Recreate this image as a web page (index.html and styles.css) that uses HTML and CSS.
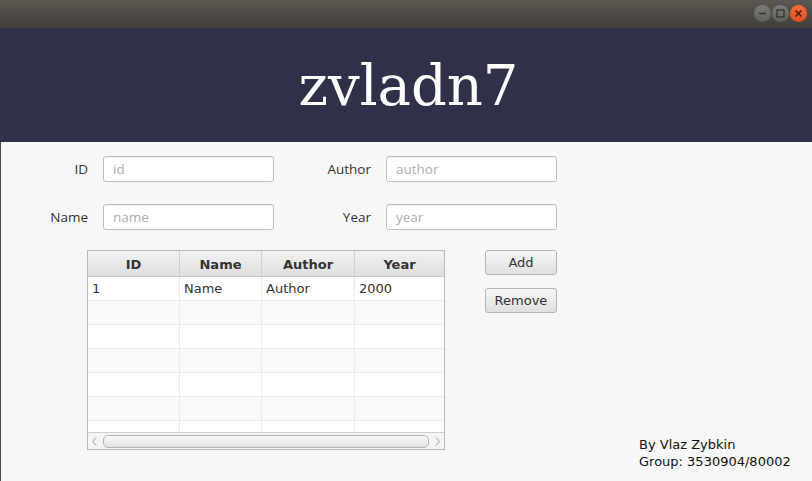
FILE: index.html
```html
<!DOCTYPE html>
<html>
<head>
<meta charset="utf-8">
<link rel="stylesheet" href="styles.css">
</head>
<body>
<div class="window">
  <div class="titlebar">
    <div class="controls">
      <span class="wbtn"><svg width="17" height="17" viewBox="0 0 17 17"><line x1="5" y1="8.5" x2="12" y2="8.5" stroke="#2f2e2b" stroke-width="1.3"/></svg></span>
      <span class="wbtn"><svg width="17" height="17" viewBox="0 0 17 17"><rect x="5" y="5" width="7" height="7" fill="none" stroke="#2f2e2b" stroke-width="1.2"/></svg></span>
      <span class="wbtn close"><svg width="17" height="17" viewBox="0 0 17 17"><path d="M5.5 5.5 L11.5 11.5 M11.5 5.5 L5.5 11.5" stroke="#3a1a0c" stroke-width="1.4"/></svg></span>
    </div>
  </div>
  <header class="header"><h1 class="title">zvladn7</h1></header>
  <main class="main">
    <div class="form">
      <label class="lbl">ID</label>
      <div class="input"><span class="ph">id</span></div>
      <label class="lbl">Author</label>
      <div class="input"><span class="ph">author</span></div>
      <label class="lbl">Name</label>
      <div class="input"><span class="ph">name</span></div>
      <label class="lbl">Year</label>
      <div class="input"><span class="ph">year</span></div>
    </div>
    <div class="bottom">
      <div class="tablebox">
        <div class="thead">
          <div class="th c1">ID</div>
          <div class="th c2">Name</div>
          <div class="th c3">Author</div>
          <div class="th c4">Year</div>
        </div>
        <div class="tbody">
          <div class="tr"><div class="td c1">1</div><div class="td c2">Name</div><div class="td c3">Author</div><div class="td c4">2000</div></div>
          <div class="tr odd"><div class="td c1"></div><div class="td c2"></div><div class="td c3"></div><div class="td c4"></div></div>
          <div class="tr"><div class="td c1"></div><div class="td c2"></div><div class="td c3"></div><div class="td c4"></div></div>
          <div class="tr odd"><div class="td c1"></div><div class="td c2"></div><div class="td c3"></div><div class="td c4"></div></div>
          <div class="tr"><div class="td c1"></div><div class="td c2"></div><div class="td c3"></div><div class="td c4"></div></div>
          <div class="tr odd"><div class="td c1"></div><div class="td c2"></div><div class="td c3"></div><div class="td c4"></div></div>
          <div class="tr"><div class="td c1"></div><div class="td c2"></div><div class="td c3"></div><div class="td c4"></div></div>
        </div>
        <div class="hscroll">
          <svg class="arrow" width="7" height="9" viewBox="0 0 7 9"><path d="M5 0.5 L1.5 4.5 L5 8.5" fill="none" stroke="#9a9a9a" stroke-width="1"/></svg>
          <div class="thumb"></div>
          <svg class="arrow" width="7" height="9" viewBox="0 0 7 9"><path d="M2 0.5 L5.5 4.5 L2 8.5" fill="none" stroke="#9a9a9a" stroke-width="1"/></svg>
        </div>
      </div>
      <div class="buttons">
        <button class="btn">Add</button>
        <button class="btn">Remove</button>
      </div>
      <div class="footer">
        <div>By Vlaz Zybkin</div>
        <div>Group: 3530904/80002</div>
      </div>
    </div>
  </main>
</div>
</body>
</html>
```
FILE: styles.css
```css
html, body {
  margin: 0;
  padding: 0;
  width: 812px;
  height: 481px;
  overflow: hidden;
  background: #f7f7f7;
}
.window {
  width: 812px;
  height: 481px;
  display: flex;
  flex-direction: column;
}
.titlebar {
  height: 28px;
  flex: none;
  background: linear-gradient(#5b5852, #403e3a);
  display: flex;
  justify-content: flex-end;
  align-items: center;
  padding-right: 5px;
  box-sizing: border-box;
}
.controls {
  display: flex;
  gap: 1px;
  margin-top: -2px;
}
.wbtn {
  width: 17px;
  height: 17px;
  border-radius: 50%;
  background: linear-gradient(#7d7b76, #62605c);
  display: flex;
}
.wbtn.close {
  background: linear-gradient(#f26c3c, #e0501c);
}
.header {
  height: 114px;
  flex: none;
  background: #2e3148;
  display: flex;
  justify-content: center;
  align-items: center;
}
.title {
  margin: 0;
  font-family: "DejaVu Serif", serif;
  font-weight: normal;
  font-size: 56px;
  color: #ffffff;
  line-height: 1;
  padding-top: 2px;
  padding-left: 5px;
}
.main {
  flex: 1;
  padding: 14px 0 0 0;
  border-left: 1px solid #4a4a4a;
}
.form {
  display: grid;
  grid-template-columns: 87px 171px 82px 171px;
  grid-auto-rows: 26px;
  column-gap: 15px;
  row-gap: 22px;
  align-items: center;
}
.lbl {
  font-family: "Open Sans", sans-serif;
  font-size: 13.5px;
  color: #333;
  text-align: right;
}
.input {
  height: 26px;
  box-sizing: border-box;
  border: 1px solid #bdbdbd;
  border-radius: 3px;
  background: #fff;
  display: flex;
  align-items: center;
  padding-left: 9px;
  box-shadow: inset 0 1px 1px rgba(0,0,0,0.05);
}
.ph {
  font-family: "Open Sans", sans-serif;
  font-size: 13.5px;
  color: #adadad;
}
.bottom {
  display: flex;
  align-items: flex-start;
  margin-top: 20px;
  padding-left: 86px;
}
.tablebox {
  width: 358px;
  height: 200px;
  box-sizing: border-box;
  border: 1px solid #b8b8b8;
  background: #fff;
  display: flex;
  flex-direction: column;
  overflow: hidden;
  font-family: "DejaVu Sans", sans-serif;
  font-size: 13px;
  color: #333;
}
.thead {
  display: flex;
  height: 25px;
  flex: none;
  background: linear-gradient(#f2f2f2, #dedede);
  border-bottom: 1px solid #c8c8c8;
}
.th {
  font-weight: bold;
  text-align: center;
  line-height: 27px;
  border-right: 1px solid #cfcfcf;
  box-sizing: border-box;
  color: #333;
}
.th.c4 { border-right: none; }
.c1 { width: 92px; }
.c2 { width: 82px; }
.c3 { width: 93px; }
.c4 { width: 89px; }
.tbody {
  flex: 1;
  overflow: hidden;
}
.tr {
  display: flex;
  height: 24px;
  box-sizing: border-box;
  border-bottom: 1px solid #ececec;
  background: #fff;
}
.tr.odd { background: #f9f9f9; }
.td {
  box-sizing: border-box;
  border-right: 1px solid #ececec;
  padding-left: 4px;
  line-height: 23px;
}
.td.c4 { border-right: none; }
.hscroll {
  height: 17px;
  flex: none;
  border-top: 1px solid #cfcfcf;
  background: #f4f4f4;
  display: flex;
  align-items: center;
  gap: 5px;
  padding: 0 3px;
  box-sizing: border-box;
}
.arrow {
  flex: none;
}
.thumb {
  flex: 1;
  height: 11px;
  border: 1px solid #b5b5b5;
  border-radius: 5px;
  background: linear-gradient(#fafafa, #e2e2e2);
}
.buttons {
  display: flex;
  flex-direction: column;
  gap: 13px;
  margin-left: 40px;
}
.btn {
  width: 72px;
  height: 25px;
  box-sizing: border-box;
  border: 1px solid #b4b4b4;
  border-radius: 3px;
  background: linear-gradient(#f6f6f6, #e0e0e0);
  font-family: "DejaVu Sans", sans-serif;
  font-size: 13px;
  color: #333;
  padding: 0;
}
.footer {
  margin-left: 82px;
  margin-top: 186px;
  font-family: "DejaVu Sans", sans-serif;
  font-size: 13px;
  line-height: 17px;
  color: #111;
}
```
